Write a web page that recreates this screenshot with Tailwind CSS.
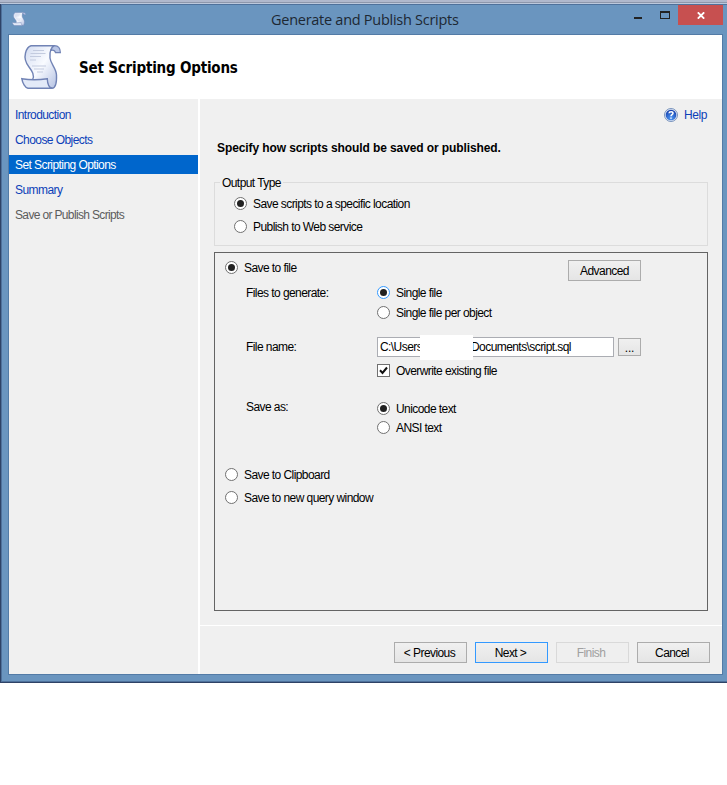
<!DOCTYPE html>
<html lang="en">
<head>
<meta charset="utf-8">
<title>Generate and Publish Scripts</title>
<script src="https://cdn.jsdelivr.net/npm/@tailwindcss/browser@4"></script>
</head>
<body class="bg-white w-[727px] h-[785px] overflow-hidden font-['Liberation_Sans',sans-serif] text-[12px] leading-[14px] tracking-[-0.57px] text-black">
<svg class="absolute w-0 h-0">
  <defs>
    <linearGradient id="paper" x1="0" y1="0" x2="1" y2="1"><stop offset="0" stop-color="#d3dcf1"/><stop offset=".5" stop-color="#f9fbff"/><stop offset="1" stop-color="#b4c1e2"/></linearGradient>
    <radialGradient id="ball" cx=".5" cy=".8" r=".8"><stop offset="0" stop-color="#4f9af5"/><stop offset="1" stop-color="#123aa8"/></radialGradient>
    <symbol id="scroll" viewBox="0 0 40 46">
      <path d="M10 1.700H34C30 3 28.500 8 29 14c.6 6 6 10 6.500 17 .3 7-1 13-4.500 13.300L11.500 36C14 31 11 27 8 23 4 18 3.500 13 4.500 9 5.500 5 7 2.500 10 1.700Z" fill="url(#paper)" stroke="#7183b5" stroke-width="1.400"/>
      <path d="M33.500 1.700C31.500 2.500 30.500 4 30 6.300c3-.5 4 .2 4.500 2.400h4.900C39.300 5 37.500 1.700 33.500 1.700Z" fill="#b9c6e6" stroke="#7183b5" stroke-width="1.200"/>
      <path d="M.8 34.700c8 1.300 17 1.300 25.500 0 .2 5 1.200 8.800 4.700 9.600H7C4 43.500 1.500 39 .8 34.700Z" fill="#e3eaf8" stroke="#7183b5" stroke-width="1.400"/>
      <path d="M12 6.500h11M9.500 9.500h15M9 12.500h11M9 16h6M11 22h14M13 25h10M16 28h6" stroke="#c3cbdf" stroke-width="1"/>
    </symbol>
  </defs>
</svg>
<div class="w-[727px] h-[683px] bg-[#2e4266] border-t-2 border-[#b0b8cc] flex flex-col">
  <div class="h-px shrink-0 bg-[#8e97ab]"></div><div class="h-px shrink-0 bg-[#bcc8dc]"></div>
  <div class="ml-px h-[678px] bg-[#6a95bf] border border-r-0 border-[#4f719b] flex flex-col">
    <header class="h-[29px] shrink-0 flex items-start">
      <svg class="w-[14px] h-[14px] ml-[10px] mt-[7px]" preserveAspectRatio="none" viewBox="0 0 40 46"><use href="#scroll" width="40" height="46"/></svg>
      <h1 class="w-[188px] ml-[245px] mt-[5px] text-[14.5px] leading-[20px] tracking-[-0.27px] whitespace-nowrap font-['Open_Sans',sans-serif] text-[#1d2833]">Generate and Publish Scripts</h1>
      <svg class="w-[8px] h-[2px] ml-[175px] mt-[12px]"><rect width="8" height="2" fill="#222"/></svg>
      <svg class="w-[10px] h-[8px] ml-[18px] mt-[6px]" viewBox="0 0 10 8" shape-rendering="crispEdges"><path d="M0 0h10v8H0ZM1 2v5h8V2Z" fill="#222" fill-rule="evenodd"/></svg>
      <div class="w-[45px] h-[20px] ml-[8px] bg-[#c75050] flex items-center justify-center"><svg class="w-[8px] h-[7px]" viewBox="0 0 8 7"><path d="M.8.3 7.200 6.700M7.200.3.8 6.700" stroke="#fff" stroke-width="1.800"/></svg></div>
    </header>
    <div class="w-[715px] h-[641px] ml-[6px] border border-[#537ba6] bg-[#f0f0f0] flex flex-col">
      <div class="h-[64px] shrink-0 bg-white flex items-center pl-[12px]">
        <svg class="w-[40px] h-[46px]"><use href="#scroll"/></svg>
        <h2 class="ml-[18px] mt-[2px] whitespace-nowrap text-[15px] leading-[20px] font-bold tracking-[-0.2px] font-['DejaVu_Sans_Condensed','DejaVu_Sans',sans-serif]">Set Scripting Options</h2>
      </div>
      <div class="flex h-[575px]">
        <nav class="w-[189px] shrink-0 pt-[6px] flex flex-col gap-[6px] text-[#0c3fb8]">
          <a class="h-[19px] pl-[6px] pt-[3px]">Introduction</a>
          <a class="h-[19px] pl-[6px] pt-[3px]">Choose Objects</a>
          <a class="h-[19px] pl-[6px] pt-[3px] bg-[#0066cc] text-white">Set Scripting Options</a>
          <a class="h-[19px] pl-[6px] pt-[3px]">Summary</a>
          <a class="h-[19px] pl-[6px] pt-[3px] tracking-[-0.65px] text-[#5c5c5c]">Save or Publish Scripts</a>
        </nav>
        <div class="w-[2px] bg-white shrink-0"></div>
        <main class="flex-1 flex flex-col">
          <div class="h-[32px] flex items-center justify-end gap-[6px] pr-[15px] text-[#0c3fb8]">
            <svg class="w-[14px] h-[14px]" viewBox="0 0 14 14"><circle cx="7" cy="7" r="6.500" fill="#dfe7f5" stroke="#5c7cae" stroke-width=".8"/><circle cx="7" cy="7" r="5.300" fill="url(#ball)"/><path d="M5 5.300C5.200 3.200 9 3.200 9 5.300 9 6.600 7 6.800 7 8.200M7 9.500v1.300" stroke="#fff" stroke-width="1.500" fill="none"/></svg>
            <span class="tracking-[-0.4px]">Help</span>
          </div>
          <h3 class="h-[14px] ml-[17px] mt-[10px] font-bold tracking-[-0.1px]">Specify how scripts should be saved or published.</h3>
          <div class="w-[494px] h-[64px] ml-[14px] mt-[27px] border border-[#dcdcdc]">
            <div class="w-[63px] h-[14px] -mt-[7px] ml-[5px] px-[2px] bg-[#f0f0f0] whitespace-nowrap">Output Type</div>
            <label class="flex items-start gap-[6px] h-[14px] ml-[19px] mt-[7px]"><svg class="w-[13px] h-[13px]"><circle cx="6.500" cy="6.500" r="6" fill="#fff" stroke="#707070"/><circle cx="6.500" cy="6.500" r="3.500" fill="#212121"/></svg>Save scripts to a specific location</label>
            <label class="flex items-start gap-[6px] h-[14px] ml-[19px] mt-[9px]"><svg class="w-[13px] h-[13px]"><circle cx="6.500" cy="6.500" r="6" fill="#fff" stroke="#707070"/></svg>Publish to Web service</label>
          </div>
          <section class="w-[494px] h-[359px] ml-[14px] mt-[6px] border border-[#646464] pl-[10px]">
            <div class="flex h-[29px] pt-[7px]">
              <label class="flex items-start gap-[6px] h-[16px] w-[343px] mt-px"><svg class="w-[13px] h-[13px]"><circle cx="6.500" cy="6.500" r="6" fill="#fff" stroke="#707070"/><circle cx="6.500" cy="6.500" r="3.500" fill="#212121"/></svg>Save to file</label>
              <button class="w-[73px] h-[21px] border border-[#acacac] bg-linear-to-b from-[#f0f0f0] to-[#e5e5e5]">Advanced</button>
            </div>
            <div class="flex pl-[21px] mt-[4px]">
              <div class="w-[131px]">Files to generate:</div>
              <div class="flex flex-col gap-[6px]">
                <label class="flex items-start gap-[6px] h-[14px]"><svg class="w-[13px] h-[13px]"><circle cx="6.500" cy="6.500" r="6" fill="#fff" stroke="#3399ff"/><circle cx="6.500" cy="6.500" r="3.500" fill="#212121"/></svg>Single file</label>
                <label class="flex items-start gap-[6px] h-[14px]"><svg class="w-[13px] h-[13px]"><circle cx="6.500" cy="6.500" r="6" fill="#fff" stroke="#707070"/></svg>Single file per object</label>
              </div>
            </div>
            <div class="flex items-center h-[20px] pl-[21px] mt-[17px]">
              <div class="w-[131px]">File name:</div>
              <div class="relative w-[237px] h-[20px] border border-[#abadb3] bg-white flex items-center pl-[2px]">
                <span class="w-[91px]">C:\Users</span><span>Documents\script.sql</span>
                <div class="absolute left-[42px] top-[-3px] w-[53px] h-[25px] bg-white"></div>
              </div>
              <button class="w-[23px] h-[18px] ml-[4px] border border-[#acacac] bg-linear-to-b from-[#f0f0f0] to-[#e5e5e5] tracking-[-0.2px] pt-px">...</button>
            </div>
            <label class="flex items-start gap-[6px] h-[14px] ml-[152px] mt-[7px]"><svg class="w-[13px] h-[13px]"><rect x=".5" y=".5" width="12" height="12" fill="#fff" stroke="#707070"/><path d="M3 6.300 5.500 9 10 3.500" fill="none" stroke="#111" stroke-width="2"/></svg>Overwrite existing file</label>
            <div class="flex pl-[21px] mt-[22px]">
              <div class="w-[131px]">Save as:</div>
              <div class="flex flex-col gap-[5px] pt-[2px]">
                <label class="flex items-start gap-[6px] h-[14px]"><svg class="w-[13px] h-[13px]"><circle cx="6.500" cy="6.500" r="6" fill="#fff" stroke="#707070"/><circle cx="6.500" cy="6.500" r="3.500" fill="#212121"/></svg>Unicode text</label>
                <label class="flex items-start gap-[6px] h-[14px] tracking-[-0.8px] whitespace-nowrap tracking-[-0.57px]"><svg class="w-[13px] h-[13px]"><circle cx="6.500" cy="6.500" r="6" fill="#fff" stroke="#707070"/></svg>ANSI text</label>
              </div>
            </div>
            <label class="flex items-start gap-[6px] h-[14px] mt-[33px]"><svg class="w-[13px] h-[13px]"><circle cx="6.500" cy="6.500" r="6" fill="#fff" stroke="#707070"/></svg>Save to Clipboard</label>
            <label class="flex items-start gap-[6px] h-[14px] mt-[9px]"><svg class="w-[13px] h-[13px]"><circle cx="6.500" cy="6.500" r="6" fill="#fff" stroke="#707070"/></svg>Save to new query window</label>
          </section>
          <footer class="mt-[14px] border-t border-white pt-[16px] pr-[12px] flex justify-end gap-[8px]">
            <button class="w-[73px] h-[21px] border border-[#acacac] bg-linear-to-b from-[#f0f0f0] to-[#e5e5e5] pr-[2px]">&lt; Previous</button>
            <button class="w-[73px] h-[21px] border border-[#3399ff] bg-linear-to-b from-[#f0f0f0] to-[#e5e5e5] pr-[2px]">Next &gt;</button>
            <button class="w-[73px] h-[21px] border border-[#d9d9d9] bg-[#efefef] text-[#a0a0a0] pr-[3px]">Finish</button>
            <button class="w-[73px] h-[21px] border border-[#acacac] bg-linear-to-b from-[#f0f0f0] to-[#e5e5e5] pr-[3px]">Cancel</button>
          </footer>
        </main>
      </div>
    </div>
  </div>
</div>
</body>
</html>
